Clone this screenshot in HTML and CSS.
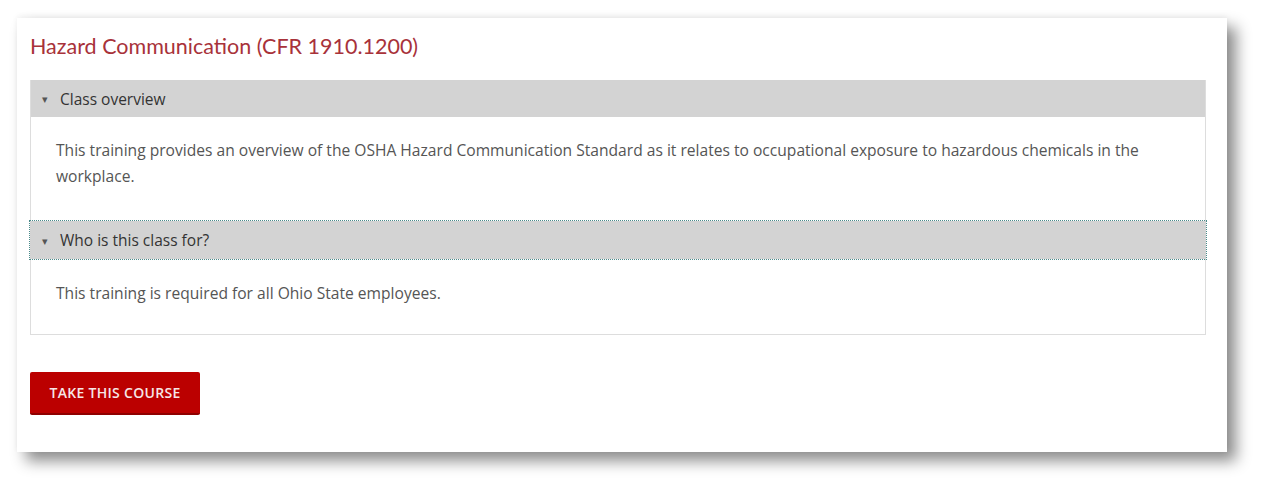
FILE: index.html
```html
<!DOCTYPE html>
<html lang="en">

<head>
    <meta charset="UTF-8">
    <meta name="viewport" content="width=device-width, initial-scale=1.0">
    <title>Hazard Communication (CFR 1910.1200)</title>
    <link rel="stylesheet" href="styles.css">
</head>

<body>
    <div class="course-card">
        <h2 class="course-title">Hazard Communication (CFR 1910.1200)</h2>
        <div class="accordion">
            <div class="acc-header">
                <span class="caret">&#9662;</span>
                <span>Class overview</span>
            </div>
            <div class="acc-body acc-body-first">
                <p>This training provides an overview of the OSHA Hazard Communication Standard as it relates to occupational exposure to hazardous chemicals in the workplace.</p>
            </div>
            <div class="acc-header focused">
                <span class="caret">&#9662;</span>
                <span>Who is this class for?</span>
            </div>
            <div class="acc-body">
                <p>This training is required for all Ohio State employees.</p>
            </div>
        </div>
        <button class="btn-take">Take this course</button>
    </div>
</body>

</html>
```

FILE: styles.css
```css
body {
    margin: 0;
    padding: 18px 0 41px 17px;
    background-color: #fff;
    font-family: "Open Sans", Lato, sans-serif;
}

.course-card {
    width: 1210px;
    height: 434px;
    box-sizing: border-box;
    padding: 14px 21px 0 13px;
    background-color: #fff;
    box-shadow: 9px 9px 14px rgba(0, 0, 0, 0.45), 0 -2px 6px rgba(0, 0, 0, 0.05);
}

.course-title {
    margin: 0 0 20px;
    font-family: Lato, sans-serif;
    font-size: 21.5px;
    line-height: 28px;
    font-weight: 400;
    color: #a8323a;
}

.accordion {
    border: 1px solid #ddd;
    border-top: none;
}

.acc-header {
    display: flex;
    align-items: center;
    height: 37px;
    padding-left: 11px;
    background-color: #d3d3d3;
    color: #333;
    font-size: 15.5px;
}

.acc-header.focused {
    height: 38px;
    margin: 1px -1px 0;
    padding-left: 12px;
    outline: 1px dotted #4a8a8a;
}

.caret {
    width: 18px;
    font-size: 11px;
    color: #555;
}

.acc-body {
    padding: 21px 25px 28px;
    color: #555;
    font-size: 15.6px;
    line-height: 26px;
}

.acc-body-first {
    padding-top: 20px;
    padding-bottom: 31px;
}

.acc-body p {
    margin: 0;
}

.btn-take {
    display: block;
    margin-top: 37px;
    width: 170px;
    height: 43px;
    border: none;
    border-bottom: 2px solid #8e0000;
    border-radius: 2px;
    background-color: #bb0000;
    color: #f6e6e6;
    font-family: "Open Sans", sans-serif;
    font-size: 14px;
    font-weight: 600;
    letter-spacing: 0.3px;
    text-transform: uppercase;
    cursor: pointer;
}
```
